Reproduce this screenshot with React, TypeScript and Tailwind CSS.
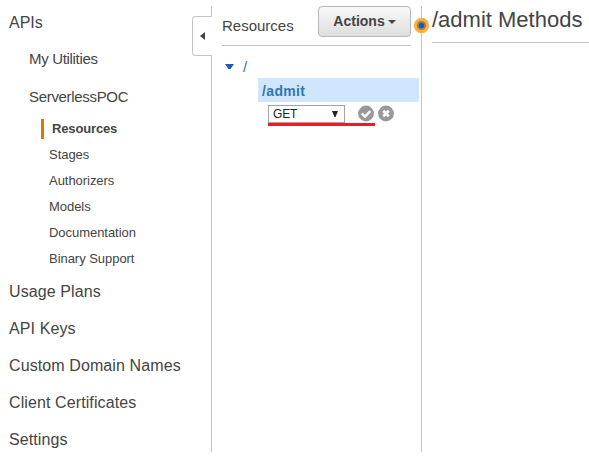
const apiPages = ["Stages", "Authorizers", "Models", "Documentation", "Binary Support"];
const sections = ["Usage Plans", "API Keys", "Custom Domain Names", "Client Certificates", "Settings"];

function Sidebar() {
  return (
    <nav className="w-[211px] shrink-0 pt-[5px] text-[16px]">
      <div className="h-9 pl-[9px] leading-[36px]">APIs</div>
      <div className="-mt-px h-[38px] pl-[29px] text-[15px] leading-[38px] tracking-[-0.32px]">My Utilities</div>
      <div className="h-[38px] pl-[29px] text-[15px] leading-[38px] tracking-[-0.32px]">ServerlessPOC</div>
      <div className="mt-[3px] ml-[41px] h-5 border-l-[3px] border-[#e07700] pl-2 text-[13px] leading-[19px] font-bold tracking-[-0.15px]">
        Resources
      </div>
      <div className="mt-[3px] pl-[49px] text-[13px]">
        {apiPages.map((name) => (
          <div key={name} className="h-[26px] leading-[26px] tracking-[-0.04px]">{name}</div>
        ))}
      </div>
      <div className="mt-px pl-[9px] tracking-[0.1px]">
        {sections.map((name) => (
          <div key={name} className="h-[37px] leading-[37px]">{name}</div>
        ))}
      </div>
    </nav>
  );
}

function ResourceTree() {
  return (
    <section className="relative mt-[6px] h-[446px] w-[211px] shrink-0 border-x border-[#c5c5c5]">
      <button className="absolute top-[10px] -left-5 flex h-10 w-5 items-center rounded-l-[4px] border border-r-0 border-[#c5c5c5] bg-white pl-[7px]">
        <svg width="5" height="8" viewBox="0 0 5 8"><path d="M5 0v8L0 4z" fill="#444" /></svg>
      </button>
      <header className="ml-[10px] flex h-10 w-[189px] justify-between border-b border-[#c5c5c5]">
        <h2 className="pt-[10px] text-[15px] leading-[20px]">Resources</h2>
        <button className="flex h-[31px] w-[93px] items-center justify-center gap-[3px] rounded-[4px] border border-[#b8b8b8] bg-linear-to-b from-[#f8f8f8] to-[#dedede] text-[14px] font-bold text-[#444]">
          Actions
          <svg width="8" height="4" viewBox="0 0 8 4"><path d="M0 0h8L4 4z" fill="#444" /></svg>
        </button>
      </header>
      <div className="mt-[11px] flex h-[21px] items-center pl-[13px] text-[15px] text-[#3276b1]">
        <svg className="-mt-[2px]" width="9" height="5" viewBox="0 0 9 5"><path d="M0 0h9L5.5 5h-2z" fill="#1c5bb9" /></svg>
        <span className="ml-[9px]">/</span>
      </div>
      <div className="ml-[46px] h-6 w-[161px] bg-[#d0e6ff] pl-[4px] text-[14px] leading-[26px] font-bold tracking-[0.35px] text-[#3276b1]">
        /admit
      </div>
      <div className="mt-[3px] ml-[56px] flex h-[18px]">
        <button className="flex h-[18px] w-[77px] items-center justify-between border border-[#a3a3a3] bg-white pr-[6px] pl-1 text-[12px] tracking-[-0.2px] text-[#222]">
          GET
          <svg width="6" height="6" viewBox="0 0 6 6"><path d="M0 0h6L3.5 6h-1z" fill="#222" /></svg>
        </button>
        <svg className="ml-[13px]" width="16" height="17" viewBox="0 0 16 17">
          <circle cx="8" cy="8.5" r="7.9" fill="#999" />
          <path d="M3.8 8.3L7 11.5l5.4-5.4" fill="none" stroke="#fff" strokeWidth="2.4" />
        </svg>
        <svg className="ml-[4px]" width="16" height="17" viewBox="0 0 16 17">
          <circle cx="8" cy="8.5" r="7.9" fill="#999" />
          <path d="M5.2 5.7l5.6 5.6m0-5.6l-5.6 5.6" fill="none" stroke="#fff" strokeWidth="2.7" />
        </svg>
      </div>
      <div className="ml-[56px] h-[3px] w-[107px] bg-[#ed1c24]" />
      <svg className="absolute top-[11px] -right-[9px]" width="17" height="17" viewBox="0 0 17 17">
        <circle cx="8.5" cy="8.5" r="7.7" fill="#fdb040" />
        <circle cx="8.5" cy="8.5" r="4.6" fill="#a5813f" />
        <circle cx="8.5" cy="8.5" r="2.7" fill="#0b5ec1" />
      </svg>
    </section>
  );
}

export default function App() {
  return (
    <div className="flex h-[456px] w-[589px] overflow-hidden bg-white font-['Liberation_Sans',Arial,sans-serif] text-[#444]">
      <Sidebar />
      <ResourceTree />
      <main className="min-w-0 flex-1 pl-[10px]">
        <h1 className="h-[43px] border-b border-[#c5c5c5] pt-[6px] text-[22px] leading-[27px]">/admit Methods</h1>
      </main>
    </div>
  );
}
